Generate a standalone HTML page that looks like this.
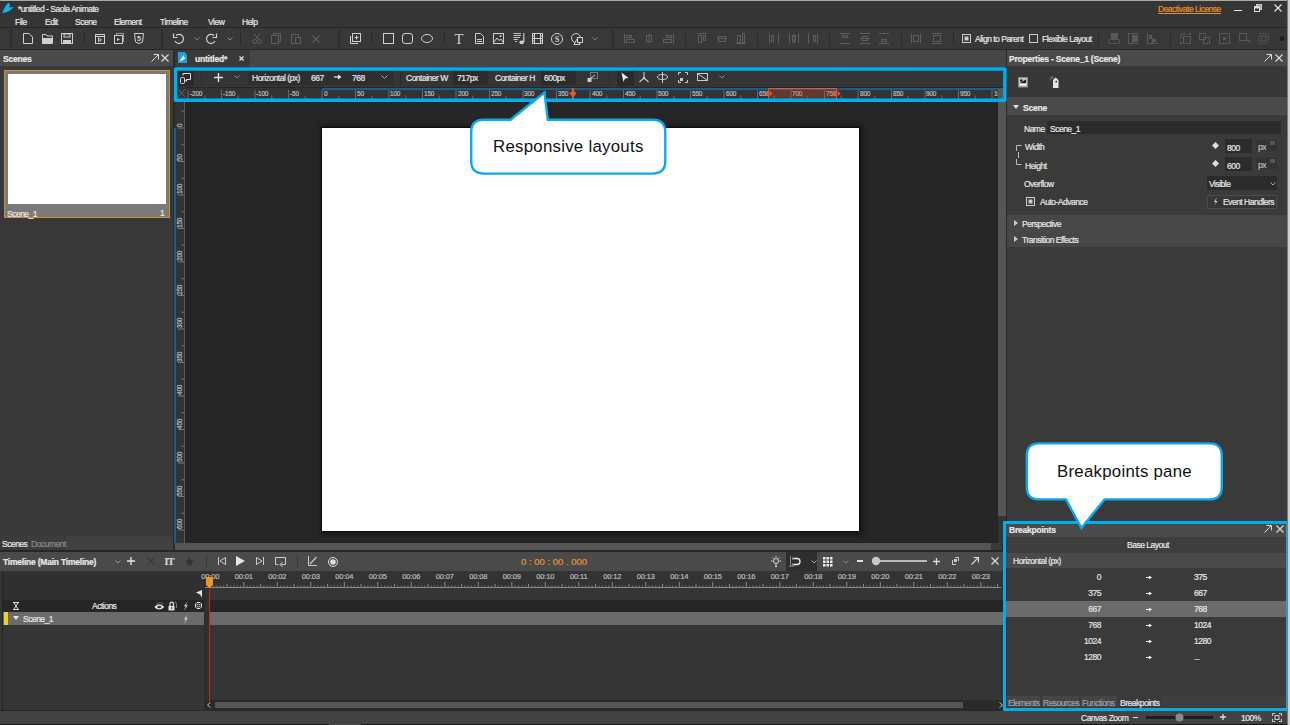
<!DOCTYPE html>
<html><head><meta charset="utf-8">
<style>
*{margin:0;padding:0;box-sizing:border-box}
html,body{width:1290px;height:725px;overflow:hidden;background:#353535;font-family:"Liberation Sans",sans-serif;color:#e2e2e2}
.a{position:absolute}
.t{position:absolute;white-space:nowrap;font-size:8px;line-height:10px;letter-spacing:-0.3px;-webkit-text-stroke:0.2px currentColor}
.t.b{letter-spacing:0}
svg{position:absolute;overflow:visible}
</style></head><body>
<div class="a" style="left:0px;top:0px;width:1290px;height:1px;background:#a9a9a9;"></div>
<div class="a" style="left:0px;top:1px;width:1287px;height:26px;background:#353535;"></div>
<svg style="left:0px;top:0px;" width="16" height="16" viewBox="0 0 16 16"><path d="M2.2 13.6 C3.5 9.5 5.5 5 8.5 2.8 C10.3 4 10.2 6.2 9.2 7.6 L13.6 7 C12 9.2 8.5 11.5 5.8 12.6 L4.5 12.6 Z" fill="#0cb4f0"/></svg>
<div class="t" style="left:18px;top:4px;font-size:8.5px;color:#e8e8e8;letter-spacing:-0.5px;">*untitled - Saola Animate</div>
<div class="t" style="left:15px;top:17px;font-size:8.5px;color:#e8e8e8;letter-spacing:-0.5px;">File</div>
<div class="t" style="left:45px;top:17px;font-size:8.5px;color:#e8e8e8;letter-spacing:-0.5px;">Edit</div>
<div class="t" style="left:75px;top:17px;font-size:8.5px;color:#e8e8e8;letter-spacing:-0.5px;">Scene</div>
<div class="t" style="left:114px;top:17px;font-size:8.5px;color:#e8e8e8;letter-spacing:-0.5px;">Element</div>
<div class="t" style="left:160px;top:17px;font-size:8.5px;color:#e8e8e8;letter-spacing:-0.5px;">Timeline</div>
<div class="t" style="left:208px;top:17px;font-size:8.5px;color:#e8e8e8;letter-spacing:-0.5px;">View</div>
<div class="t" style="left:242px;top:17px;font-size:8.5px;color:#e8e8e8;letter-spacing:-0.5px;">Help</div>
<div class="t" style="left:1158px;top:4px;font-size:8.5px;color:#e8922c;letter-spacing:-0.5px;text-decoration:underline;">Deactivate License</div>
<div class="a" style="left:1234px;top:9.5px;width:8px;height:1.7px;background:#e6e6e6;"></div>
<svg style="left:1254px;top:4px;" width="8" height="8" viewBox="0 0 8 8"><rect x="2.5" y="0.5" width="5" height="5" fill="#999" stroke="#ccc"/><rect x="0.5" y="2.5" width="5" height="5" fill="#333" stroke="#ddd"/><rect x="1" y="3" width="4" height="1.5" fill="#ddd"/></svg>
<svg style="left:1274px;top:4px;" width="8" height="8" viewBox="0 0 8 8"><path d="M0.5 0.5 L7.5 7.5 M7.5 0.5 L0.5 7.5" stroke="#e6e6e6" stroke-width="1.2"/></svg>
<div class="a" style="left:0px;top:27px;width:1287px;height:1px;background:#262626;"></div>
<div class="a" style="left:0px;top:28px;width:1287px;height:21px;background:#383838;"></div>
<div class="a" style="left:0px;top:49px;width:1287px;height:1px;background:#262626;"></div>
<svg style="left:10px;top:30px;" width="2" height="17" viewBox="0 0 2 17"><path d="M1 0 V17" stroke="#1e1e1e" stroke-width="2" stroke-dasharray="1 1"/></svg>
<svg style="left:161px;top:30px;" width="2" height="17" viewBox="0 0 2 17"><path d="M1 0 V17" stroke="#1e1e1e" stroke-width="2" stroke-dasharray="1 1"/></svg>
<svg style="left:338px;top:30px;" width="2" height="17" viewBox="0 0 2 17"><path d="M1 0 V17" stroke="#1e1e1e" stroke-width="2" stroke-dasharray="1 1"/></svg>
<svg style="left:612px;top:30px;" width="2" height="17" viewBox="0 0 2 17"><path d="M1 0 V17" stroke="#1e1e1e" stroke-width="2" stroke-dasharray="1 1"/></svg>
<div class="a" style="left:84px;top:32px;width:1px;height:13px;background:#2a2a2a;"></div>
<div class="a" style="left:371px;top:32px;width:1px;height:13px;background:#2a2a2a;"></div>
<div class="a" style="left:444px;top:32px;width:1px;height:13px;background:#2a2a2a;"></div>
<div class="a" style="left:685px;top:32px;width:1px;height:13px;background:#2a2a2a;"></div>
<div class="a" style="left:757px;top:32px;width:1px;height:13px;background:#2a2a2a;"></div>
<div class="a" style="left:829px;top:32px;width:1px;height:13px;background:#2a2a2a;"></div>
<div class="a" style="left:901px;top:32px;width:1px;height:13px;background:#2a2a2a;"></div>
<div class="a" style="left:953px;top:32px;width:1px;height:13px;background:#2a2a2a;"></div>
<div class="a" style="left:1098px;top:32px;width:1px;height:13px;background:#2a2a2a;"></div>
<div class="a" style="left:1170px;top:32px;width:1px;height:13px;background:#2a2a2a;"></div>
<svg style="left:23px;top:33px;" width="10" height="11" viewBox="0 0 10 11"><path d="M0.5 0.5 H6 L9.5 4 V10.5 H0.5 Z" fill="none" stroke="#d0d0d0"/></svg>
<svg style="left:42px;top:34px;" width="11" height="10" viewBox="0 0 11 10"><path d="M0.5 9.5 V0.5 H4 L5 2 H10.5 V9.5 Z" fill="none" stroke="#d0d0d0"/><rect x="1" y="4" width="9" height="5" fill="#d0d0d0"/></svg>
<svg style="left:61px;top:33px;" width="12" height="11" viewBox="0 0 12 11"><rect x="0.5" y="0.5" width="11" height="10" fill="none" stroke="#d0d0d0"/><rect x="3" y="1" width="6" height="3" fill="none" stroke="#d0d0d0"/><rect x="2" y="7" width="8" height="3" fill="#d0d0d0"/></svg>
<svg style="left:95px;top:34px;" width="10" height="10" viewBox="0 0 10 10"><rect x="0.5" y="0.5" width="9" height="9" fill="none" stroke="#d0d0d0"/><path d="M0.5 2.5 H9.5" stroke="#d0d0d0"/><path d="M3.5 4 L6.5 5.8 L3.5 7.6 Z" fill="none" stroke="#d0d0d0"/></svg>
<svg style="left:114px;top:33px;" width="10" height="11" viewBox="0 0 10 11"><rect x="2.5" y="0.5" width="7" height="8" fill="none" stroke="#999"/><rect x="0.5" y="2.5" width="8" height="8" fill="#383838" stroke="#d0d0d0"/><path d="M3 5 L6 6.5 L3 8 Z" fill="#d0d0d0"/></svg>
<svg style="left:134px;top:33px;" width="10" height="11" viewBox="0 0 10 11"><path d="M0.5 0.5 H9.5 L8.5 9 L5 10.5 L1.5 9 Z" fill="none" stroke="#d0d0d0"/><text x="5" y="8" font-size="7" text-anchor="middle" fill="#d0d0d0" font-family="Liberation Sans" font-weight="bold">5</text></svg>
<svg style="left:173px;top:33px;" width="12" height="11" viewBox="0 0 12 11"><path d="M3 2.5 A4.5 4.5 0 1 1 2 8" fill="none" stroke="#d0d0d0" stroke-width="1.2"/><path d="M0.5 0.5 V4.5 H4.5" fill="none" stroke="#d0d0d0" stroke-width="1.2"/></svg>
<svg style="left:194px;top:37px;" width="6" height="4" viewBox="0 0 6 4"><path d="M0.5 0.5 L3 3 L5.5 0.5" fill="none" stroke="#888"/></svg>
<svg style="left:205px;top:33px;" width="12" height="11" viewBox="0 0 12 11"><path d="M9 2.5 A4.5 4.5 0 1 0 10 8" fill="none" stroke="#d0d0d0" stroke-width="1.2"/><path d="M11.5 0.5 V4.5 H7.5" fill="none" stroke="#d0d0d0" stroke-width="1.2"/></svg>
<svg style="left:227px;top:37px;" width="6" height="4" viewBox="0 0 6 4"><path d="M0.5 0.5 L3 3 L5.5 0.5" fill="none" stroke="#888"/></svg>
<div class="a" style="left:240px;top:32px;width:1px;height:13px;background:#2a2a2a;"></div>
<svg style="left:252px;top:33px;" width="10" height="11" viewBox="0 0 10 11"><circle cx="2.5" cy="8.5" r="2" fill="none" stroke="#5e5e5e"/><circle cx="7.5" cy="8.5" r="2" fill="none" stroke="#5e5e5e"/><path d="M3.5 6.5 L8 0.5 M6.5 6.5 L2 0.5" stroke="#5e5e5e"/></svg>
<svg style="left:271px;top:33px;" width="10" height="11" viewBox="0 0 10 11"><rect x="2.5" y="0.5" width="7" height="8" fill="none" stroke="#5e5e5e"/><rect x="0.5" y="2.5" width="7" height="8" fill="#383838" stroke="#5e5e5e"/></svg>
<svg style="left:291px;top:33px;" width="10" height="11" viewBox="0 0 10 11"><rect x="0.5" y="1.5" width="7" height="9" fill="none" stroke="#5e5e5e"/><rect x="4.5" y="4.5" width="5" height="6" fill="#383838" stroke="#5e5e5e"/></svg>
<svg style="left:312px;top:35px;" width="8" height="8" viewBox="0 0 8 8"><path d="M0.5 0.5 L7.5 7.5 M7.5 0.5 L0.5 7.5" stroke="#5e5e5e" stroke-width="1.1"/></svg>
<svg style="left:350px;top:33px;" width="11" height="11" viewBox="0 0 11 11"><path d="M0.5 3 V10.5 H8" fill="none" stroke="#d0d0d0"/><rect x="2.5" y="0.5" width="8" height="8" fill="none" stroke="#d0d0d0"/><path d="M6.5 2.5 V6.5 M4.5 4.5 H8.5" stroke="#d0d0d0"/></svg>
<svg style="left:383px;top:33px;" width="11" height="11" viewBox="0 0 11 11"><rect x="0.5" y="0.5" width="10" height="10" fill="none" stroke="#d0d0d0"/></svg>
<svg style="left:402px;top:33px;" width="11" height="11" viewBox="0 0 11 11"><rect x="0.5" y="0.5" width="10" height="10" rx="2.5" fill="none" stroke="#d0d0d0"/></svg>
<svg style="left:421px;top:34px;" width="12" height="9" viewBox="0 0 12 9"><ellipse cx="6" cy="4.5" rx="5.5" ry="4" fill="none" stroke="#d0d0d0"/></svg>
<div class="t" style="left:454.5px;top:30.5px;font-size:14.5px;line-height:16px;font-family:Liberation Serif;color:#d0d0d0;letter-spacing:0;-webkit-text-stroke:0;">T</div>
<svg style="left:475px;top:33px;" width="9" height="11" viewBox="0 0 9 11"><path d="M0.5 0.5 H5.5 L8.5 3.5 V10.5 H0.5 Z" fill="none" stroke="#d0d0d0"/><path d="M2 6.5 H7 M2 8.5 H7" stroke="#d0d0d0"/></svg>
<svg style="left:493px;top:33px;" width="11" height="11" viewBox="0 0 11 11"><rect x="0.5" y="0.5" width="10" height="10" fill="none" stroke="#d0d0d0"/><path d="M1 9 L4 5 L6 7.5 L8 6 L10 9" fill="none" stroke="#d0d0d0"/><circle cx="7.5" cy="3" r="1" fill="#d0d0d0"/></svg>
<svg style="left:513px;top:33px;" width="12" height="12" viewBox="0 0 12 12"><path d="M0.5 0.5 H8 M0.5 2.5 H8 M0.5 4.5 H7 M0.5 6.5 H5 M2 8.5 H4" stroke="#d0d0d0" stroke-width="0.9"/><path d="M10.8 0 V9" stroke="#d0d0d0" stroke-width="1.2"/><ellipse cx="8.7" cy="9.3" rx="2.3" ry="1.9" fill="#d0d0d0"/></svg>
<svg style="left:532px;top:33px;" width="11" height="11" viewBox="0 0 11 11"><rect x="0.5" y="0.5" width="10" height="10" fill="none" stroke="#d0d0d0"/><path d="M2.5 0.5 V10.5 M8.5 0.5 V10.5 M0.5 3 H2.5 M0.5 5.5 H2.5 M0.5 8 H2.5 M8.5 3 H10.5 M8.5 5.5 H10.5 M8.5 8 H10.5 M2.5 5.5 H8.5" stroke="#d0d0d0"/></svg>
<svg style="left:551px;top:33px;" width="12" height="12" viewBox="0 0 12 12"><circle cx="6" cy="6" r="5.5" fill="none" stroke="#d0d0d0"/><text x="6" y="9" font-size="8.5" text-anchor="middle" fill="#d0d0d0" font-family="Liberation Serif" font-weight="bold">S</text></svg>
<svg style="left:571px;top:33px;" width="12" height="12" viewBox="0 0 12 12"><circle cx="5" cy="5" r="4.5" fill="none" stroke="#d0d0d0"/><path d="M3 11.5 L6 6 L9 11.5 Z" fill="#383838" stroke="#d0d0d0"/><rect x="6.5" y="4.5" width="5" height="5" fill="#383838" stroke="#d0d0d0"/></svg>
<svg style="left:592px;top:37px;" width="6" height="4" viewBox="0 0 6 4"><path d="M0.5 0.5 L3 3 L5.5 0.5" fill="none" stroke="#888"/></svg>
<svg style="left:624px;top:33px;" width="11" height="11" viewBox="0 0 11 11"><path d="M0.5 0.5 V10.5" stroke="#5e5e5e"/><rect x="2.5" y="2.5" width="5" height="2" fill="none" stroke="#5e5e5e"/><rect x="2.5" y="6.5" width="8" height="3" fill="none" stroke="#5e5e5e"/></svg>
<svg style="left:644px;top:33px;" width="11" height="11" viewBox="0 0 11 11"><path d="M5 0.5 V10.5" stroke="#5e5e5e"/><rect x="2.5" y="2.5" width="5" height="6" fill="none" stroke="#5e5e5e"/></svg>
<svg style="left:663px;top:33px;" width="11" height="11" viewBox="0 0 11 11"><path d="M10.5 0.5 V10.5" stroke="#5e5e5e"/><rect x="3.5" y="2.5" width="5" height="2" fill="none" stroke="#5e5e5e"/><rect x="0.5" y="6.5" width="8" height="3" fill="none" stroke="#5e5e5e"/></svg>
<svg style="left:697px;top:33px;" width="11" height="11" viewBox="0 0 11 11"><path d="M0 0.5 H10" stroke="#5e5e5e"/><rect x="1.5" y="2.5" width="3" height="7" fill="none" stroke="#5e5e5e"/><rect x="6.5" y="2.5" width="2" height="5" fill="none" stroke="#5e5e5e"/></svg>
<svg style="left:717px;top:33px;" width="11" height="11" viewBox="0 0 11 11"><path d="M0 5.5 H10" stroke="#5e5e5e"/><rect x="1.5" y="3.5" width="7" height="5" fill="none" stroke="#5e5e5e"/></svg>
<svg style="left:736px;top:33px;" width="11" height="11" viewBox="0 0 11 11"><path d="M0 10.5 H10" stroke="#5e5e5e"/><rect x="1.5" y="2.5" width="3" height="7" fill="none" stroke="#5e5e5e"/><rect x="6.5" y="0.5" width="2" height="9" fill="none" stroke="#5e5e5e"/></svg>
<svg style="left:769px;top:33px;" width="11" height="11" viewBox="0 0 11 11"><path d="M0.5 0.5 V10.5 M9.5 0.5 V10.5" stroke="#5e5e5e"/><rect x="2.5" y="2.5" width="2" height="6" fill="none" stroke="#5e5e5e"/></svg>
<svg style="left:789px;top:33px;" width="11" height="11" viewBox="0 0 11 11"><path d="M0.5 0.5 V10.5 M9.5 0.5 V10.5 M5 0.5 V10.5" stroke="#5e5e5e"/><rect x="3.5" y="2.5" width="3" height="6" fill="none" stroke="#5e5e5e"/></svg>
<svg style="left:808px;top:33px;" width="11" height="11" viewBox="0 0 11 11"><path d="M0.5 0.5 V10.5 M9.5 0.5 V10.5" stroke="#5e5e5e"/><rect x="5.5" y="2.5" width="2" height="6" fill="none" stroke="#5e5e5e"/></svg>
<svg style="left:840px;top:33px;" width="11" height="11" viewBox="0 0 11 11"><path d="M0 0.5 H10 M0 10.5 H10" stroke="#5e5e5e"/><rect x="2.5" y="2.5" width="5" height="2" fill="none" stroke="#5e5e5e"/></svg>
<svg style="left:860px;top:33px;" width="11" height="11" viewBox="0 0 11 11"><path d="M0 0.5 H10 M0 10.5 H10 M0 5.5 H10" stroke="#5e5e5e"/><rect x="2.5" y="3.5" width="5" height="4" fill="none" stroke="#5e5e5e"/></svg>
<svg style="left:879px;top:33px;" width="11" height="11" viewBox="0 0 11 11"><path d="M0 0.5 H10 M0 10.5 H10" stroke="#5e5e5e"/><rect x="2.5" y="6.5" width="5" height="2" fill="none" stroke="#5e5e5e"/></svg>
<svg style="left:911px;top:33px;" width="11" height="11" viewBox="0 0 11 11"><path d="M0.5 1 V10 M9.5 1 V10" stroke="#5e5e5e"/><rect x="2.5" y="2.5" width="5" height="6" fill="none" stroke="#5e5e5e"/></svg>
<svg style="left:932px;top:33px;" width="11" height="11" viewBox="0 0 11 11"><path d="M0 0.5 H10 M0 10.5 H10" stroke="#5e5e5e"/><rect x="1.5" y="2.5" width="7" height="6" fill="none" stroke="#5e5e5e"/></svg>
<svg style="left:962px;top:34px;" width="9" height="9" viewBox="0 0 9 9"><rect x="0.5" y="0.5" width="8" height="8" fill="none" stroke="#ccc"/><rect x="2.5" y="2.5" width="4" height="4" fill="#ccc"/></svg>
<div class="t" style="left:975px;top:34px;font-size:8.5px;color:#e8e8e8;letter-spacing:-0.5px;">Align to Parent</div>
<svg style="left:1029px;top:34px;" width="9" height="9" viewBox="0 0 9 9"><rect x="0.5" y="0.5" width="8" height="8" fill="none" stroke="#ccc"/></svg>
<div class="t" style="left:1042px;top:34px;font-size:8.5px;color:#e8e8e8;letter-spacing:-0.5px;">Flexible Layout</div>
<svg style="left:1108px;top:33px;" width="12" height="11" viewBox="0 0 12 11"><rect x="3.5" y="0.5" width="6" height="5" fill="#585858" stroke="#585858"/><rect x="0.5" y="6.5" width="11" height="4" rx="1" fill="none" stroke="#585858"/></svg>
<svg style="left:1128px;top:33px;" width="11" height="11" viewBox="0 0 11 11"><rect x="0.5" y="0.5" width="4" height="10" fill="none" stroke="#585858"/><rect x="5" y="2" width="5" height="7" fill="#585858"/><path d="M5 0.5 H11 M5 10.5 H11" stroke="#585858"/></svg>
<svg style="left:1147px;top:33px;" width="11" height="11" viewBox="0 0 11 11"><rect x="0.5" y="5.5" width="5" height="5" fill="none" stroke="#585858"/><rect x="2" y="2" width="3" height="3" fill="#585858"/><rect x="6" y="6" width="3" height="3" fill="#585858"/><path d="M0.5 0 V5 M6 10.5 H11" stroke="#585858"/></svg>
<svg style="left:1180px;top:33px;" width="11" height="11" viewBox="0 0 11 11"><rect x="3.5" y="3.5" width="7" height="7" fill="none" stroke="#585858"/><path d="M1 1 H6 M1 1 V6" stroke="#585858"/><rect x="0" y="9" width="2" height="2" fill="#585858"/><rect x="9" y="0" width="2" height="2" fill="#585858"/></svg>
<svg style="left:1199px;top:33px;" width="11" height="11" viewBox="0 0 11 11"><rect x="0.5" y="0.5" width="6" height="6" fill="none" stroke="#585858"/><rect x="4.5" y="4.5" width="6" height="6" fill="none" stroke="#585858"/></svg>
<svg style="left:1219px;top:33px;" width="11" height="11" viewBox="0 0 11 11"><rect x="0.5" y="0.5" width="10" height="10" fill="none" stroke="#585858"/><rect x="4" y="4" width="3" height="3" fill="#585858"/></svg>
<svg style="left:1239px;top:33px;" width="11" height="11" viewBox="0 0 11 11"><rect x="0.5" y="0.5" width="7" height="7" fill="none" stroke="#585858"/><path d="M7.5 7.5 H10.5 V10.5" stroke="#585858" fill="none"/></svg>
<svg style="left:1258px;top:33px;" width="11" height="11" viewBox="0 0 11 11"><rect x="0.5" y="0.5" width="10" height="10" rx="1.5" fill="none" stroke="#585858" stroke-dasharray="1.5 1"/><rect x="3" y="3" width="5" height="5" fill="none" stroke="#585858"/></svg>
<div class="t" style="left:1279px;top:33.5px;font-size:10px;color:#151515;font-weight:bold;">&#187;</div>
<div class="a" style="left:0px;top:50px;width:173px;height:16px;background:#4a4a4a;"></div>
<div class="t" style="left:3px;top:54px;font-size:8.5px;color:#e8e8e8;font-weight:bold;letter-spacing:-0.22px;">Scenes</div>
<svg style="left:151px;top:54px;" width="8" height="8" viewBox="0 0 8 8"><path d="M0.5 7.5 L7 1 M2.5 0.5 H7.5 V5.5" fill="none" stroke="#ddd"/></svg>
<svg style="left:161px;top:54px;" width="8" height="8" viewBox="0 0 8 8"><path d="M0.5 0.5 L7.5 7.5 M7.5 0.5 L0.5 7.5" stroke="#ddd" stroke-width="1.1"/></svg>
<div class="a" style="left:173px;top:50px;width:2px;height:501px;background:#2a2a2a;"></div>
<div class="a" style="left:0px;top:66px;width:173px;height:470px;background:#383838;"></div>
<div class="a" style="left:4px;top:69.5px;width:166px;height:148px;background:#7a7a7a;border:1px solid #d98a2b;"></div>
<div class="a" style="left:8px;top:74px;width:158px;height:130px;background:#ffffff;"></div>
<div class="t" style="left:7px;top:208.5px;font-size:8.5px;color:#e8e8e8;letter-spacing:-0.5px;">Scene_1</div>
<div class="t" style="left:160px;top:208px;font-size:8.5px;color:#e8e8e8;letter-spacing:-0.5px;">1</div>
<div class="a" style="left:0px;top:536px;width:173px;height:14px;background:#414141;"></div>
<div class="a" style="left:0px;top:536px;width:28px;height:14px;background:#3a3a3a;"></div>
<div class="t" style="left:2px;top:539px;font-size:8.5px;color:#e8e8e8;letter-spacing:-0.5px;">Scenes</div>
<div class="a" style="left:29px;top:536px;width:37px;height:14px;background:#3c3c3c;"></div>
<div class="t" style="left:31px;top:539px;font-size:8.5px;color:#8c8c8c;letter-spacing:-0.5px;">Document</div>
<div class="a" style="left:0px;top:550px;width:1006px;height:2px;background:#262626;"></div>
<div class="a" style="left:175px;top:50px;width:831px;height:17px;background:#454545;"></div>
<div class="a" style="left:175px;top:50px;width:75px;height:17px;background:#3a3a3a;"></div>
<svg style="left:178px;top:52px;" width="9" height="11" viewBox="0 0 9 11"><path d="M0 0 H6.5 L9 2.5 V11 H0 Z" fill="#1aa0dc"/><path d="M1.5 9.5 C2.5 7 4 5 6 3 L6.2 5.8 L8 5.5 C6.5 7.5 4.5 8.8 1.5 9.5 Z" fill="#f0f0f0"/></svg>
<div class="t" style="left:195px;top:54px;font-size:8.5px;color:#e8e8e8;font-weight:bold;letter-spacing:-0.22px;">untitled*</div>
<svg style="left:238.5px;top:56px;" width="5" height="5" viewBox="0 0 5 5"><path d="M0.5 0.5 L4.5 4.5 M4.5 0.5 L0.5 4.5" stroke="#e0e0e0" stroke-width="1.3"/></svg>
<div class="a" style="left:175px;top:67px;width:831px;height:484px;background:#262626;"></div>
<div class="a" style="left:177px;top:70px;width:826px;height:17px;background:#353535;"></div>
<div class="a" style="left:177px;top:70px;width:17px;height:16px;background:#2a2a2a;"></div>
<svg style="left:180px;top:73px;" width="11" height="11" viewBox="0 0 11 11"><rect x="0.5" y="4.5" width="4" height="6" rx="1" fill="none" stroke="#ddd"/><path d="M3 2.5 V0.5 H10.5 V6.5 H6" fill="none" stroke="#ddd"/><path d="M5 7.5 L7 6 L7 9 Z" fill="#ddd"/></svg>
<div class="a" style="left:201px;top:72px;width:1px;height:13px;background:#2a2a2a;"></div>
<svg style="left:214px;top:73px;" width="9" height="9" viewBox="0 0 9 9"><path d="M4.5 0 V9 M0 4.5 H9" stroke="#e0e0e0" stroke-width="1.4"/></svg>
<svg style="left:234px;top:75px;" width="6" height="4" viewBox="0 0 6 4"><path d="M0.5 0.5 L3 3 L5.5 0.5" fill="none" stroke="#888"/></svg>
<div class="a" style="left:248px;top:70px;width:145px;height:15px;background:#2e2e2e;"></div>
<div class="t" style="left:252px;top:73px;font-size:8.5px;color:#e8e8e8;letter-spacing:-0.5px;">Horizontal (px)</div>
<div class="t" style="left:311px;top:73px;font-size:8.5px;color:#e8e8e8;letter-spacing:-0.5px;">667</div>
<svg style="left:334px;top:74px;" width="8" height="6" viewBox="0 0 8 6"><path d="M0 3 H6" stroke="#eee" stroke-width="1.2"/><path d="M4 0.5 L7.5 3 L4 5.5 Z" fill="#eee"/></svg>
<div class="t" style="left:352px;top:73px;font-size:8.5px;color:#e8e8e8;letter-spacing:-0.5px;">768</div>
<svg style="left:381px;top:75px;" width="7" height="4" viewBox="0 0 7 4"><path d="M0.5 0.5 L3.5 3.5 L6.5 0.5" fill="none" stroke="#aaa"/></svg>
<div class="a" style="left:400px;top:72px;width:1px;height:13px;background:#2a2a2a;"></div>
<div class="t" style="left:406px;top:73px;font-size:8.5px;color:#e8e8e8;letter-spacing:-0.5px;">Container W</div>
<div class="a" style="left:453px;top:70px;width:35px;height:15px;background:#2b2b2b;"></div>
<div class="t" style="left:457px;top:73px;font-size:8.5px;color:#e8e8e8;letter-spacing:-0.5px;">717px</div>
<div class="t" style="left:495px;top:73px;font-size:8.5px;color:#e8e8e8;letter-spacing:-0.5px;">Container H</div>
<div class="a" style="left:541px;top:70px;width:35px;height:15px;background:#2b2b2b;"></div>
<div class="t" style="left:544px;top:73px;font-size:8.5px;color:#e8e8e8;letter-spacing:-0.5px;">600px</div>
<svg style="left:587px;top:72px;" width="11" height="11" viewBox="0 0 11 11"><rect x="3.5" y="0.5" width="7" height="6" fill="none" stroke="#bbb" stroke-dasharray="1 1"/><rect x="0.5" y="6" width="4" height="4" fill="#ccc"/><path d="M4 6 L8 3" stroke="#ccc"/></svg>
<div class="a" style="left:609px;top:72px;width:1px;height:13px;background:#2a2a2a;"></div>
<div class="a" style="left:617px;top:70px;width:17px;height:16px;background:#2a2a2a;"></div>
<svg style="left:621px;top:72px;" width="8" height="11" viewBox="0 0 8 11"><path d="M0.5 0.5 L7.5 6 L4 6.5 L2.5 10 Z" fill="#eee"/></svg>
<svg style="left:639px;top:72px;" width="10" height="11" viewBox="0 0 10 11"><path d="M5 0 V6 L0.5 10 M5 6 L9.5 10" fill="none" stroke="#ccc" stroke-width="1.1"/><circle cx="5" cy="6" r="1.2" fill="#ccc"/></svg>
<svg style="left:657px;top:72px;" width="11" height="11" viewBox="0 0 11 11"><ellipse cx="5.5" cy="5" rx="5" ry="2.5" fill="none" stroke="#ccc"/><path d="M5.5 0 V11" stroke="#ccc"/></svg>
<svg style="left:678px;top:72px;" width="10" height="11" viewBox="0 0 10 11"><path d="M0.5 3 V0.5 H3 M7 0.5 H9.5 V3 M9.5 8 V10.5 H7 M3 10.5 H0.5 V8" fill="none" stroke="#ccc"/><rect x="2" y="6" width="3" height="3" fill="#ccc"/></svg>
<svg style="left:697px;top:72px;" width="11" height="10" viewBox="0 0 11 10"><rect x="0.5" y="1.5" width="10" height="7" fill="none" stroke="#ccc"/><path d="M0.5 1.5 L10.5 8.5" stroke="#ccc"/></svg>
<svg style="left:719px;top:75px;" width="6" height="4" viewBox="0 0 6 4"><path d="M0.5 0.5 L3 3 L5.5 0.5" fill="none" stroke="#888"/></svg>
<div class="a" style="left:177px;top:87px;width:826px;height:12px;background:#333333;"></div>
<div class="a" style="left:177px;top:87px;width:826px;height:1px;background:#262626;"></div>
<div class="a" style="left:322px;top:88px;width:681px;height:2px;background:#1b5e8c;"></div>
<svg style="left:0px;top:0px;" width="1290" height="100" viewBox="0 0 1290 100"><path d="M188.0 90 V99" stroke="#6a6a6a"/><path d="M204.8 95.5 V99" stroke="#6a6a6a"/><path d="M221.5 90 V99" stroke="#6a6a6a"/><path d="M238.2 95.5 V99" stroke="#6a6a6a"/><path d="M255.0 90 V99" stroke="#6a6a6a"/><path d="M271.8 95.5 V99" stroke="#6a6a6a"/><path d="M288.5 90 V99" stroke="#6a6a6a"/><path d="M305.2 95.5 V99" stroke="#6a6a6a"/><path d="M322.0 90 V99" stroke="#6a6a6a"/><path d="M338.8 95.5 V99" stroke="#6a6a6a"/><path d="M355.5 90 V99" stroke="#6a6a6a"/><path d="M372.2 95.5 V99" stroke="#6a6a6a"/><path d="M389.0 90 V99" stroke="#6a6a6a"/><path d="M405.8 95.5 V99" stroke="#6a6a6a"/><path d="M422.5 90 V99" stroke="#6a6a6a"/><path d="M439.2 95.5 V99" stroke="#6a6a6a"/><path d="M456.0 90 V99" stroke="#6a6a6a"/><path d="M472.8 95.5 V99" stroke="#6a6a6a"/><path d="M489.5 90 V99" stroke="#6a6a6a"/><path d="M506.2 95.5 V99" stroke="#6a6a6a"/><path d="M523.0 90 V99" stroke="#6a6a6a"/><path d="M539.8 95.5 V99" stroke="#6a6a6a"/><path d="M556.5 90 V99" stroke="#6a6a6a"/><path d="M573.2 95.5 V99" stroke="#6a6a6a"/><path d="M590.0 90 V99" stroke="#6a6a6a"/><path d="M606.8 95.5 V99" stroke="#6a6a6a"/><path d="M623.5 90 V99" stroke="#6a6a6a"/><path d="M640.2 95.5 V99" stroke="#6a6a6a"/><path d="M657.0 90 V99" stroke="#6a6a6a"/><path d="M673.8 95.5 V99" stroke="#6a6a6a"/><path d="M690.5 90 V99" stroke="#6a6a6a"/><path d="M707.2 95.5 V99" stroke="#6a6a6a"/><path d="M724.0 90 V99" stroke="#6a6a6a"/><path d="M740.8 95.5 V99" stroke="#6a6a6a"/><path d="M757.5 90 V99" stroke="#6a6a6a"/><path d="M774.2 95.5 V99" stroke="#6a6a6a"/><path d="M791.0 90 V99" stroke="#6a6a6a"/><path d="M807.8 95.5 V99" stroke="#6a6a6a"/><path d="M824.5 90 V99" stroke="#6a6a6a"/><path d="M841.2 95.5 V99" stroke="#6a6a6a"/><path d="M858.0 90 V99" stroke="#6a6a6a"/><path d="M874.8 95.5 V99" stroke="#6a6a6a"/><path d="M891.5 90 V99" stroke="#6a6a6a"/><path d="M908.2 95.5 V99" stroke="#6a6a6a"/><path d="M925.0 90 V99" stroke="#6a6a6a"/><path d="M941.8 95.5 V99" stroke="#6a6a6a"/><path d="M958.5 90 V99" stroke="#6a6a6a"/><path d="M975.2 95.5 V99" stroke="#6a6a6a"/><path d="M992.0 90 V99" stroke="#6a6a6a"/></svg>
<div class="t" style="left:190px;top:88.5px;font-size:6.5px;color:#bdbdbd;letter-spacing:-0.2px;">-200</div>
<div class="t" style="left:223px;top:88.5px;font-size:6.5px;color:#bdbdbd;letter-spacing:-0.2px;">-150</div>
<div class="t" style="left:256px;top:88.5px;font-size:6.5px;color:#bdbdbd;letter-spacing:-0.2px;">-100</div>
<div class="t" style="left:290px;top:88.5px;font-size:6.5px;color:#bdbdbd;letter-spacing:-0.2px;">-50</div>
<div class="t" style="left:324px;top:88.5px;font-size:6.5px;color:#bdbdbd;letter-spacing:-0.2px;">0</div>
<div class="t" style="left:357px;top:88.5px;font-size:6.5px;color:#bdbdbd;letter-spacing:-0.2px;">50</div>
<div class="t" style="left:390px;top:88.5px;font-size:6.5px;color:#bdbdbd;letter-spacing:-0.2px;">100</div>
<div class="t" style="left:424px;top:88.5px;font-size:6.5px;color:#bdbdbd;letter-spacing:-0.2px;">150</div>
<div class="t" style="left:458px;top:88.5px;font-size:6.5px;color:#bdbdbd;letter-spacing:-0.2px;">200</div>
<div class="t" style="left:491px;top:88.5px;font-size:6.5px;color:#bdbdbd;letter-spacing:-0.2px;">250</div>
<div class="t" style="left:524px;top:88.5px;font-size:6.5px;color:#bdbdbd;letter-spacing:-0.2px;">300</div>
<div class="t" style="left:558px;top:88.5px;font-size:6.5px;color:#bdbdbd;letter-spacing:-0.2px;">350</div>
<div class="t" style="left:592px;top:88.5px;font-size:6.5px;color:#bdbdbd;letter-spacing:-0.2px;">400</div>
<div class="t" style="left:625px;top:88.5px;font-size:6.5px;color:#bdbdbd;letter-spacing:-0.2px;">450</div>
<div class="t" style="left:658px;top:88.5px;font-size:6.5px;color:#bdbdbd;letter-spacing:-0.2px;">500</div>
<div class="t" style="left:692px;top:88.5px;font-size:6.5px;color:#bdbdbd;letter-spacing:-0.2px;">550</div>
<div class="t" style="left:726px;top:88.5px;font-size:6.5px;color:#bdbdbd;letter-spacing:-0.2px;">600</div>
<div class="t" style="left:759px;top:88.5px;font-size:6.5px;color:#bdbdbd;letter-spacing:-0.2px;">650</div>
<div class="t" style="left:792px;top:88.5px;font-size:6.5px;color:#bdbdbd;letter-spacing:-0.2px;">700</div>
<div class="t" style="left:826px;top:88.5px;font-size:6.5px;color:#bdbdbd;letter-spacing:-0.2px;">750</div>
<div class="t" style="left:860px;top:88.5px;font-size:6.5px;color:#bdbdbd;letter-spacing:-0.2px;">800</div>
<div class="t" style="left:893px;top:88.5px;font-size:6.5px;color:#bdbdbd;letter-spacing:-0.2px;">850</div>
<div class="t" style="left:926px;top:88.5px;font-size:6.5px;color:#bdbdbd;letter-spacing:-0.2px;">900</div>
<div class="t" style="left:960px;top:88.5px;font-size:6.5px;color:#bdbdbd;letter-spacing:-0.2px;">950</div>
<div class="t" style="left:994px;top:88.5px;font-size:6.5px;color:#bdbdbd;letter-spacing:-0.2px;">1000</div>
<div class="a" style="left:177px;top:87px;width:9px;height:12px;background:#353535;"></div>
<svg style="left:178px;top:89px;" width="7" height="8" viewBox="0 0 7 8"><path d="M0 0 L7 8 M0 8 L7 0" stroke="#666"/></svg>
<div class="a" style="left:768px;top:88px;width:69px;height:11px;background:rgba(190,70,45,0.32);"></div>
<div class="a" style="left:768px;top:88px;width:69px;height:1px;background:#e8552a;"></div>
<div class="a" style="left:768px;top:88px;width:1px;height:11px;background:#e8552a;"></div>
<div class="a" style="left:836px;top:88px;width:1px;height:11px;background:#e8552a;"></div>
<div class="a" style="left:572px;top:88px;width:1.5px;height:11px;background:#e8552a;"></div>
<svg style="left:568.7px;top:90px;" width="8" height="7" viewBox="0 0 8 7"><path d="M0.5 3.5 L3.3 0.5 V6.5 Z M7.5 3.5 L4.7 0.5 V6.5 Z" fill="#e8552a"/></svg>
<svg style="left:764.5px;top:90px;" width="8" height="7" viewBox="0 0 8 7"><path d="M0.5 3.5 L3.3 0.5 V6.5 Z M7.5 3.5 L4.7 0.5 V6.5 Z" fill="#e8552a"/></svg>
<svg style="left:832.5px;top:90px;" width="8" height="7" viewBox="0 0 8 7"><path d="M0.5 3.5 L3.3 0.5 V6.5 Z M7.5 3.5 L4.7 0.5 V6.5 Z" fill="#e8552a"/></svg>
<div class="a" style="left:998px;top:88px;width:5px;height:11px;background:#555;"></div>
<div class="a" style="left:175px;top:99px;width:10px;height:444px;background:#333333;"></div>
<div class="a" style="left:174px;top:128px;width:2px;height:415px;background:#1b5e8c;"></div>
<div class="a" style="left:184px;top:99px;width:1px;height:444px;background:#5a5a5a;"></div>
<svg style="left:0px;top:0px;" width="190" height="600" viewBox="0 0 190 600"><path d="M178 128.0 H184" stroke="#7a7a7a"/><path d="M181.5 111.2 H184" stroke="#7a7a7a"/><path d="M178 161.5 H184" stroke="#7a7a7a"/><path d="M181.5 144.8 H184" stroke="#7a7a7a"/><path d="M178 195.0 H184" stroke="#7a7a7a"/><path d="M181.5 178.2 H184" stroke="#7a7a7a"/><path d="M178 228.5 H184" stroke="#7a7a7a"/><path d="M181.5 211.8 H184" stroke="#7a7a7a"/><path d="M178 262.0 H184" stroke="#7a7a7a"/><path d="M181.5 245.2 H184" stroke="#7a7a7a"/><path d="M178 295.5 H184" stroke="#7a7a7a"/><path d="M181.5 278.8 H184" stroke="#7a7a7a"/><path d="M178 329.0 H184" stroke="#7a7a7a"/><path d="M181.5 312.2 H184" stroke="#7a7a7a"/><path d="M178 362.5 H184" stroke="#7a7a7a"/><path d="M181.5 345.8 H184" stroke="#7a7a7a"/><path d="M178 396.0 H184" stroke="#7a7a7a"/><path d="M181.5 379.2 H184" stroke="#7a7a7a"/><path d="M178 429.5 H184" stroke="#7a7a7a"/><path d="M181.5 412.8 H184" stroke="#7a7a7a"/><path d="M178 463.0 H184" stroke="#7a7a7a"/><path d="M181.5 446.2 H184" stroke="#7a7a7a"/><path d="M178 496.5 H184" stroke="#7a7a7a"/><path d="M181.5 479.8 H184" stroke="#7a7a7a"/><path d="M178 530.0 H184" stroke="#7a7a7a"/><path d="M181.5 513.2 H184" stroke="#7a7a7a"/></svg>
<div class="t" style="left:174.5px;top:127.0px;font-size:6.5px;line-height:10px;color:#bdbdbd;letter-spacing:-0.2px;transform:rotate(-90deg);transform-origin:0 0;">0</div>
<div class="t" style="left:174.5px;top:160.5px;font-size:6.5px;line-height:10px;color:#bdbdbd;letter-spacing:-0.2px;transform:rotate(-90deg);transform-origin:0 0;">50</div>
<div class="t" style="left:174.5px;top:194.0px;font-size:6.5px;line-height:10px;color:#bdbdbd;letter-spacing:-0.2px;transform:rotate(-90deg);transform-origin:0 0;">100</div>
<div class="t" style="left:174.5px;top:227.5px;font-size:6.5px;line-height:10px;color:#bdbdbd;letter-spacing:-0.2px;transform:rotate(-90deg);transform-origin:0 0;">150</div>
<div class="t" style="left:174.5px;top:261.0px;font-size:6.5px;line-height:10px;color:#bdbdbd;letter-spacing:-0.2px;transform:rotate(-90deg);transform-origin:0 0;">200</div>
<div class="t" style="left:174.5px;top:294.5px;font-size:6.5px;line-height:10px;color:#bdbdbd;letter-spacing:-0.2px;transform:rotate(-90deg);transform-origin:0 0;">250</div>
<div class="t" style="left:174.5px;top:328.0px;font-size:6.5px;line-height:10px;color:#bdbdbd;letter-spacing:-0.2px;transform:rotate(-90deg);transform-origin:0 0;">300</div>
<div class="t" style="left:174.5px;top:361.5px;font-size:6.5px;line-height:10px;color:#bdbdbd;letter-spacing:-0.2px;transform:rotate(-90deg);transform-origin:0 0;">350</div>
<div class="t" style="left:174.5px;top:395.0px;font-size:6.5px;line-height:10px;color:#bdbdbd;letter-spacing:-0.2px;transform:rotate(-90deg);transform-origin:0 0;">400</div>
<div class="t" style="left:174.5px;top:428.5px;font-size:6.5px;line-height:10px;color:#bdbdbd;letter-spacing:-0.2px;transform:rotate(-90deg);transform-origin:0 0;">450</div>
<div class="t" style="left:174.5px;top:462.0px;font-size:6.5px;line-height:10px;color:#bdbdbd;letter-spacing:-0.2px;transform:rotate(-90deg);transform-origin:0 0;">500</div>
<div class="t" style="left:174.5px;top:495.5px;font-size:6.5px;line-height:10px;color:#bdbdbd;letter-spacing:-0.2px;transform:rotate(-90deg);transform-origin:0 0;">550</div>
<div class="t" style="left:174.5px;top:529.0px;font-size:6.5px;line-height:10px;color:#bdbdbd;letter-spacing:-0.2px;transform:rotate(-90deg);transform-origin:0 0;">600</div>
<div class="a" style="left:322px;top:128px;width:537px;height:403px;background:#ffffff;box-shadow:0 0 0 1px #0c0c0c,1px 1px 6px 2px rgba(0,0,0,.6);"></div>
<div class="a" style="left:998px;top:99px;width:8px;height:444px;background:#333333;"></div>
<div class="a" style="left:998px;top:99px;width:8px;height:417px;background:#555555;"></div>
<div class="a" style="left:175px;top:543px;width:827px;height:7px;background:#3a3a3a;"></div>
<div class="a" style="left:175px;top:543px;width:816px;height:7px;background:#555555;"></div>
<div class="a" style="left:1006px;top:50px;width:1px;height:662px;background:#2a2a2a;"></div>
<div class="a" style="left:1007px;top:50px;width:280px;height:470px;background:#3a3a3a;"></div>
<div class="a" style="left:1007px;top:50px;width:280px;height:16px;background:#4a4a4a;"></div>
<div class="t" style="left:1009px;top:54px;font-size:8.5px;color:#e8e8e8;font-weight:bold;letter-spacing:-0.22px;">Properties - Scene_1 (Scene)</div>
<svg style="left:1264px;top:54px;" width="8" height="8" viewBox="0 0 8 8"><path d="M0.5 7.5 L7 1 M2.5 0.5 H7.5 V5.5" fill="none" stroke="#ddd"/></svg>
<svg style="left:1275px;top:54px;" width="8" height="8" viewBox="0 0 8 8"><path d="M0.5 0.5 L7.5 7.5 M7.5 0.5 L0.5 7.5" stroke="#ddd" stroke-width="1.1"/></svg>
<div class="a" style="left:1007px;top:66px;width:280px;height:31px;background:#373737;"></div>
<svg style="left:1018px;top:76.5px;" width="10" height="10.5" viewBox="0 0 10 10.5"><rect x="0.5" y="0.5" width="9" height="9.5" fill="#c4c4c4" stroke="#8a8a8a"/><path d="M2 6 L8 2.5 V6 Z" fill="#1a1a1a"/><rect x="2" y="2.5" width="2.5" height="2" fill="#1a1a1a"/><rect x="2" y="7" width="6" height="1.5" fill="#f4f4f4"/></svg>
<svg style="left:1050px;top:76px;" width="9" height="12" viewBox="0 0 9 12"><path d="M3 4 L5.5 1.5 L8.5 4 V12 H3 Z" fill="#e6e6e6"/><path d="M4.5 6 L7 4.5 V6.5 Z" fill="#222"/><path d="M0.5 1 L1.5 3 M2 0 L3 2.5 M0 3.5 L1 4" stroke="#999" stroke-width="0.8"/></svg>
<svg style="left:1019px;top:93.5px;" width="9" height="4" viewBox="0 0 9 4"><path d="M0.5 3.5 L4.5 0.5 L8.5 3.5" fill="#2e2e2e" stroke="#505050" stroke-width="0.8"/></svg>
<div class="a" style="left:1007px;top:97px;width:280px;height:18px;background:#4a4a4a;"></div>
<svg style="left:1013px;top:105px;" width="6" height="4" viewBox="0 0 6 4"><path d="M0 0 H6 L3 4 Z" fill="#ddd"/></svg>
<div class="t" style="left:1023px;top:103px;font-size:8.5px;color:#e8e8e8;font-weight:bold;letter-spacing:-0.22px;">Scene</div>
<div class="a" style="left:1007px;top:115px;width:280px;height:100px;background:#3a3a3a;"></div>
<div class="t" style="left:1024px;top:124px;font-size:8.5px;color:#e8e8e8;letter-spacing:-0.5px;">Name</div>
<div class="a" style="left:1047px;top:121px;width:234px;height:13px;background:#2b2b2b;"></div>
<div class="t" style="left:1050px;top:124px;font-size:8.5px;color:#e8e8e8;letter-spacing:-0.5px;">Scene_1</div>
<svg style="left:1016px;top:145px;" width="6" height="20" viewBox="0 0 6 20"><path d="M5.5 0.5 H0.5 V6 M0.5 14 V19.5 H5.5 M2.5 7 V13" fill="none" stroke="#bbb"/></svg>
<div class="t" style="left:1025px;top:142px;font-size:8.5px;color:#e8e8e8;letter-spacing:-0.5px;">Width</div>
<div class="t" style="left:1025px;top:161px;font-size:8.5px;color:#e8e8e8;letter-spacing:-0.5px;">Height</div>
<svg style="left:1212px;top:142px;" width="7" height="7" viewBox="0 0 7 7"><path d="M3.5 0 L7 3.5 L3.5 7 L0 3.5 Z" fill="#ddd"/></svg>
<div class="a" style="left:1225px;top:139px;width:27px;height:14px;background:#2b2b2b;"></div>
<div class="t" style="left:1227px;top:142.5px;font-size:8.5px;color:#e8e8e8;letter-spacing:-0.5px;">800</div>
<div class="a" style="left:1256px;top:140px;width:21px;height:11px;background:#333333;"></div>
<div class="t" style="left:1258px;top:141.5px;font-size:8.5px;color:#bbb;letter-spacing:-0.5px;">px</div>
<div class="a" style="left:1270px;top:141px;width:5px;height:4px;background:#555;"></div>
<svg style="left:1212px;top:160px;" width="7" height="7" viewBox="0 0 7 7"><path d="M3.5 0 L7 3.5 L3.5 7 L0 3.5 Z" fill="#ddd"/></svg>
<div class="a" style="left:1225px;top:157px;width:27px;height:14px;background:#2b2b2b;"></div>
<div class="t" style="left:1227px;top:160.5px;font-size:8.5px;color:#e8e8e8;letter-spacing:-0.5px;">600</div>
<div class="a" style="left:1256px;top:158px;width:21px;height:11px;background:#333333;"></div>
<div class="t" style="left:1258px;top:159.5px;font-size:8.5px;color:#bbb;letter-spacing:-0.5px;">px</div>
<div class="a" style="left:1270px;top:159px;width:5px;height:4px;background:#555;"></div>
<div class="t" style="left:1024px;top:179px;font-size:8.5px;color:#e8e8e8;letter-spacing:-0.5px;">Overflow</div>
<div class="a" style="left:1207px;top:176px;width:70px;height:14px;background:#2b2b2b;"></div>
<div class="t" style="left:1209px;top:179px;font-size:8.5px;color:#e8e8e8;letter-spacing:-0.5px;">Visible</div>
<svg style="left:1270px;top:182px;" width="6" height="4" viewBox="0 0 6 4"><path d="M0.5 0.5 L3 3 L5.5 0.5" fill="none" stroke="#aaa"/></svg>
<svg style="left:1026px;top:197px;" width="9" height="9" viewBox="0 0 9 9"><rect x="0.5" y="0.5" width="8" height="8" fill="none" stroke="#ccc"/><rect x="2.5" y="2.5" width="4" height="4" fill="#ccc"/></svg>
<div class="t" style="left:1040px;top:197px;font-size:8.5px;color:#e8e8e8;letter-spacing:-0.5px;">Auto-Advance</div>
<div class="a" style="left:1207px;top:195px;width:70px;height:14px;background:#363636;border:1px solid #4c4c4c;"></div>
<svg style="left:1213px;top:197px;" width="5" height="9" viewBox="0 0 5 9"><path d="M4 0 L1 5 H3 L1 9 L4.5 4 H2.5 Z" fill="#ddd"/></svg>
<div class="t" style="left:1223px;top:197px;font-size:8.5px;color:#e8e8e8;letter-spacing:-0.5px;">Event Handlers</div>
<div class="a" style="left:1007px;top:215px;width:280px;height:32px;background:#474747;"></div>
<svg style="left:1014px;top:220px;" width="4" height="6" viewBox="0 0 4 6"><path d="M0 0 L4 3 L0 6 Z" fill="#ccc"/></svg>
<div class="t" style="left:1022px;top:219px;font-size:8.5px;color:#e8e8e8;letter-spacing:-0.5px;">Perspective</div>
<svg style="left:1014px;top:236px;" width="4" height="6" viewBox="0 0 4 6"><path d="M0 0 L4 3 L0 6 Z" fill="#ccc"/></svg>
<div class="t" style="left:1022px;top:235px;font-size:8.5px;color:#e8e8e8;letter-spacing:-0.5px;">Transition Effects</div>
<div class="a" style="left:1007px;top:247px;width:280px;height:273px;background:#3a3a3a;"></div>
<div class="a" style="left:1007px;top:520px;width:280px;height:192px;background:#3a3a3a;"></div>
<div class="a" style="left:1006px;top:524px;width:280px;height:13px;background:#4a4a4a;"></div>
<div class="t" style="left:1009px;top:525px;font-size:8.5px;color:#e8e8e8;font-weight:bold;letter-spacing:-0.22px;">Breakpoints</div>
<svg style="left:1264px;top:525px;" width="8" height="8" viewBox="0 0 8 8"><path d="M0.5 7.5 L7 1 M2.5 0.5 H7.5 V5.5" fill="none" stroke="#ddd"/></svg>
<svg style="left:1276px;top:525px;" width="8" height="8" viewBox="0 0 8 8"><path d="M0.5 0.5 L7.5 7.5 M7.5 0.5 L0.5 7.5" stroke="#ddd" stroke-width="1.1"/></svg>
<div class="a" style="left:1006px;top:537px;width:280px;height:16px;background:#3e3e3e;"></div>
<div class="t" style="left:1127px;top:540px;font-size:8.5px;color:#e8e8e8;letter-spacing:-0.5px;">Base Layout</div>
<div class="a" style="left:1006px;top:553px;width:280px;height:15px;background:#4a4a4a;"></div>
<div class="t" style="left:1013px;top:556px;font-size:8.5px;color:#e8e8e8;letter-spacing:-0.5px;">Horizontal (px)</div>
<div class="t" style="left:1060px;top:572px;width:41px;text-align:right;font-size:8.5px;letter-spacing:-0.5px;">0</div>
<svg style="left:1146px;top:575px;" width="6" height="5" viewBox="0 0 6 5"><path d="M0 2.5 H4" stroke="#eee" stroke-width="1"/><path d="M3 0.5 L6 2.5 L3 4.5 Z" fill="#eee"/></svg>
<div class="t" style="left:1194px;top:572px;font-size:8.5px;color:#e8e8e8;letter-spacing:-0.5px;">375</div>
<div class="t" style="left:1060px;top:588px;width:41px;text-align:right;font-size:8.5px;letter-spacing:-0.5px;">375</div>
<svg style="left:1146px;top:591px;" width="6" height="5" viewBox="0 0 6 5"><path d="M0 2.5 H4" stroke="#eee" stroke-width="1"/><path d="M3 0.5 L6 2.5 L3 4.5 Z" fill="#eee"/></svg>
<div class="t" style="left:1194px;top:588px;font-size:8.5px;color:#e8e8e8;letter-spacing:-0.5px;">667</div>
<div class="a" style="left:1006px;top:601px;width:280px;height:16px;background:#6b6b6b;"></div>
<div class="t" style="left:1060px;top:604px;width:41px;text-align:right;font-size:8.5px;letter-spacing:-0.5px;">667</div>
<svg style="left:1146px;top:607px;" width="6" height="5" viewBox="0 0 6 5"><path d="M0 2.5 H4" stroke="#eee" stroke-width="1"/><path d="M3 0.5 L6 2.5 L3 4.5 Z" fill="#eee"/></svg>
<div class="t" style="left:1194px;top:604px;font-size:8.5px;color:#e8e8e8;letter-spacing:-0.5px;">768</div>
<div class="t" style="left:1060px;top:620px;width:41px;text-align:right;font-size:8.5px;letter-spacing:-0.5px;">768</div>
<svg style="left:1146px;top:623px;" width="6" height="5" viewBox="0 0 6 5"><path d="M0 2.5 H4" stroke="#eee" stroke-width="1"/><path d="M3 0.5 L6 2.5 L3 4.5 Z" fill="#eee"/></svg>
<div class="t" style="left:1194px;top:620px;font-size:8.5px;color:#e8e8e8;letter-spacing:-0.5px;">1024</div>
<div class="t" style="left:1060px;top:636px;width:41px;text-align:right;font-size:8.5px;letter-spacing:-0.5px;">1024</div>
<svg style="left:1146px;top:639px;" width="6" height="5" viewBox="0 0 6 5"><path d="M0 2.5 H4" stroke="#eee" stroke-width="1"/><path d="M3 0.5 L6 2.5 L3 4.5 Z" fill="#eee"/></svg>
<div class="t" style="left:1194px;top:636px;font-size:8.5px;color:#e8e8e8;letter-spacing:-0.5px;">1280</div>
<div class="t" style="left:1060px;top:652px;width:41px;text-align:right;font-size:8.5px;letter-spacing:-0.5px;">1280</div>
<svg style="left:1146px;top:655px;" width="6" height="5" viewBox="0 0 6 5"><path d="M0 2.5 H4" stroke="#eee" stroke-width="1"/><path d="M3 0.5 L6 2.5 L3 4.5 Z" fill="#eee"/></svg>
<div class="t" style="left:1194px;top:652px;font-size:8.5px;color:#e8e8e8;letter-spacing:-0.5px;">...</div>
<div class="a" style="left:1006px;top:696px;width:280px;height:11px;background:#3f3f3f;"></div>
<div class="a" style="left:1006px;top:696px;width:155px;height:11px;background:#3a3a3a;"></div>
<div class="a" style="left:1007px;top:696px;width:33px;height:11px;background:#454545;"></div>
<div class="t" style="left:1008px;top:698px;font-size:8.5px;color:#a0a0a0;letter-spacing:-0.5px;">Elements</div>
<div class="a" style="left:1042px;top:696px;width:37px;height:11px;background:#454545;"></div>
<div class="t" style="left:1043px;top:698px;font-size:8.5px;color:#a0a0a0;letter-spacing:-0.5px;">Resources</div>
<div class="a" style="left:1081px;top:696px;width:36px;height:11px;background:#454545;"></div>
<div class="t" style="left:1082px;top:698px;font-size:8.5px;color:#a0a0a0;letter-spacing:-0.5px;">Functions</div>
<div class="t" style="left:1120px;top:698px;font-size:8.5px;color:#e8e8e8;letter-spacing:-0.5px;">Breakpoints</div>
<div class="a" style="left:0px;top:552px;width:1006px;height:20px;background:#4a4a4a;"></div>
<div class="t" style="left:3px;top:557px;font-size:8.5px;color:#e8e8e8;font-weight:bold;letter-spacing:-0.22px;">Timeline (Main Timeline)</div>
<svg style="left:115px;top:560px;" width="6" height="4" viewBox="0 0 6 4"><path d="M0.5 0.5 L3 3 L5.5 0.5" fill="none" stroke="#999"/></svg>
<svg style="left:127px;top:557px;" width="8" height="8" viewBox="0 0 8 8"><path d="M4 0 V8 M0 4 H8" stroke="#e6e6e6" stroke-width="1.3"/></svg>
<svg style="left:147px;top:557px;" width="8" height="8" viewBox="0 0 8 8"><path d="M0.5 0.5 L7.5 7.5 M7.5 0.5 L0.5 7.5" stroke="#3a3a3a" stroke-width="1.1"/></svg>
<div class="t" style="left:164.5px;top:556.5px;font-size:10px;color:#d8d8d8;font-weight:bold;font-family:Liberation Serif;letter-spacing:-0.6px;">IT</div>
<svg style="left:184.5px;top:556.5px;" width="9" height="9" viewBox="0 0 9 9"><path d="M4.5 0 L5.8 3.3 L9 3.5 L6.5 5.6 L7.3 9 L4.5 7.1 L1.7 9 L2.5 5.6 L0 3.5 L3.2 3.3 Z" fill="#333"/></svg>
<div class="a" style="left:206px;top:555px;width:1px;height:13px;background:#3a3a3a;"></div>
<svg style="left:218px;top:557px;" width="8" height="8" viewBox="0 0 8 8"><path d="M0.5 0 V8" stroke="#ccc"/><path d="M7.5 0.5 L2 4 L7.5 7.5 Z" fill="none" stroke="#ccc"/></svg>
<svg style="left:236px;top:556px;" width="9" height="10" viewBox="0 0 9 10"><path d="M0 0 L9 5 L0 10 Z" fill="#e6e6e6"/></svg>
<svg style="left:256px;top:557px;" width="8" height="8" viewBox="0 0 8 8"><path d="M7.5 0 V8" stroke="#ccc"/><path d="M0.5 0.5 L6 4 L0.5 7.5 Z" fill="none" stroke="#ccc"/></svg>
<svg style="left:275px;top:557px;" width="11" height="9" viewBox="0 0 11 9"><path d="M3 7.5 H0.5 V0.5 H10.5 V7.5 H5.5" fill="none" stroke="#ccc"/><path d="M7.5 5 L5 7.5 L7.5 10" fill="none" stroke="#ccc"/></svg>
<div class="a" style="left:297px;top:555px;width:1px;height:13px;background:#3a3a3a;"></div>
<svg style="left:308px;top:556px;" width="9" height="10" viewBox="0 0 9 10"><path d="M0.5 0 V9.5 H9" fill="none" stroke="#ccc"/><path d="M2 8 L8.5 1" stroke="#ccc" stroke-width="1.2"/></svg>
<svg style="left:328px;top:557px;" width="10" height="10" viewBox="0 0 10 10"><circle cx="5" cy="5" r="4.5" fill="none" stroke="#ddd"/><circle cx="5" cy="5" r="2.8" fill="#ddd"/></svg>
<div class="t" style="left:521px;top:556.5px;font-size:9.5px;color:#e8952e;letter-spacing:0;">0 : 00 : 00 . 000</div>
<svg style="left:771px;top:556px;" width="10" height="11" viewBox="0 0 10 11"><circle cx="5" cy="5" r="2.5" fill="none" stroke="#ddd"/><path d="M5 0 V1.5 M0 5 H1.5 M8.5 5 H10 M1.5 1.5 L2.5 2.5 M8.5 1.5 L7.5 2.5 M4 9 H6 M4 10.5 H6" stroke="#ddd"/></svg>
<div class="a" style="left:786px;top:552px;width:31px;height:19px;background:#2e2e2e;"></div>
<svg style="left:789px;top:556px;" width="11" height="11" viewBox="0 0 11 11"><path d="M3 2.5 H8 A3 3 0 0 1 8 8.5 H3" fill="none" stroke="#eee" stroke-width="1.3"/><path d="M3 2.5 H5 M3 8.5 H5" stroke="#e8872a" stroke-width="1.5"/><path d="M1.5 0 V11 M0 10 H6" stroke="#888"/></svg>
<svg style="left:811px;top:560px;" width="6" height="4" viewBox="0 0 6 4"><path d="M0.5 0.5 L3 3 L5.5 0.5" fill="none" stroke="#aaa"/></svg>
<svg style="left:823px;top:557px;" width="10" height="10" viewBox="0 0 10 10"><rect x="0.0" y="0.0" width="2.5" height="2.5" fill="#eee"/><rect x="3.5" y="0.0" width="2.5" height="2.5" fill="#eee"/><rect x="7.0" y="0.0" width="2.5" height="2.5" fill="#eee"/><rect x="0.0" y="3.5" width="2.5" height="2.5" fill="#eee"/><rect x="3.5" y="3.5" width="2.5" height="2.5" fill="#eee"/><rect x="7.0" y="3.5" width="2.5" height="2.5" fill="#eee"/><rect x="0.0" y="7.0" width="2.5" height="2.5" fill="#eee"/><rect x="3.5" y="7.0" width="2.5" height="2.5" fill="#eee"/><rect x="7.0" y="7.0" width="2.5" height="2.5" fill="#eee"/></svg>
<svg style="left:843px;top:560px;" width="6" height="4" viewBox="0 0 6 4"><path d="M0.5 0.5 L3 3 L5.5 0.5" fill="none" stroke="#888"/></svg>
<div class="a" style="left:857px;top:560px;width:6px;height:2px;background:#ddd;"></div>
<div class="a" style="left:872px;top:560px;width:55px;height:2px;background:#bbb;"></div>
<svg style="left:871px;top:556px;" width="10" height="10" viewBox="0 0 10 10"><circle cx="5" cy="5" r="4.2" fill="#c8c8c8"/></svg>
<svg style="left:933px;top:558px;" width="7" height="7" viewBox="0 0 7 7"><path d="M3.5 0 V7 M0 3.5 H7" stroke="#ddd" stroke-width="1.3"/></svg>
<svg style="left:952px;top:557px;" width="7" height="8" viewBox="0 0 7 8"><path d="M0.5 3 V7.5 H4 M6.5 0.5 V4 M3 0.5 H6.5" fill="none" stroke="#ccc"/><rect x="2" y="2" width="3" height="3" fill="#ccc"/></svg>
<svg style="left:971px;top:557px;" width="8" height="8" viewBox="0 0 8 8"><path d="M0.5 7.5 L7 1 M2.5 0.5 H7.5 V5.5" fill="none" stroke="#ddd" stroke-width="1.1"/></svg>
<svg style="left:991px;top:557px;" width="8" height="8" viewBox="0 0 8 8"><path d="M0.5 0.5 L7.5 7.5 M7.5 0.5 L0.5 7.5" stroke="#ddd" stroke-width="1.2"/></svg>
<div class="a" style="left:0px;top:571px;width:1006px;height:139px;background:#353535;"></div>
<div class="a" style="left:3px;top:572px;width:201px;height:28px;background:#303030;"></div>
<div class="a" style="left:2px;top:571px;width:1px;height:139px;background:#252525;"></div>
<div class="a" style="left:204px;top:571px;width:1px;height:139px;background:#2a2a2a;"></div>
<div class="a" style="left:205px;top:572px;width:796px;height:16px;background:#333333;"></div>
<div class="a" style="left:205px;top:587px;width:796px;height:1px;background:#8a8a8a;"></div>
<svg style="left:0px;top:0px;" width="1010" height="600" viewBox="0 0 1010 600"><path d="M210.3 582 V587" stroke="#8a8a8a"/><path d="M213.7 585.5 V587" stroke="#777"/><path d="M217.0 585.5 V587" stroke="#777"/><path d="M220.4 585.5 V587" stroke="#777"/><path d="M223.7 585.5 V587" stroke="#777"/><path d="M227.1 584 V587" stroke="#8a8a8a"/><path d="M230.4 585.5 V587" stroke="#777"/><path d="M233.8 585.5 V587" stroke="#777"/><path d="M237.1 585.5 V587" stroke="#777"/><path d="M240.5 585.5 V587" stroke="#777"/><path d="M243.8 582 V587" stroke="#8a8a8a"/><path d="M247.2 585.5 V587" stroke="#777"/><path d="M250.5 585.5 V587" stroke="#777"/><path d="M253.9 585.5 V587" stroke="#777"/><path d="M257.2 585.5 V587" stroke="#777"/><path d="M260.6 584 V587" stroke="#8a8a8a"/><path d="M263.9 585.5 V587" stroke="#777"/><path d="M267.2 585.5 V587" stroke="#777"/><path d="M270.6 585.5 V587" stroke="#777"/><path d="M273.9 585.5 V587" stroke="#777"/><path d="M277.3 582 V587" stroke="#8a8a8a"/><path d="M280.7 585.5 V587" stroke="#777"/><path d="M284.0 585.5 V587" stroke="#777"/><path d="M287.4 585.5 V587" stroke="#777"/><path d="M290.7 585.5 V587" stroke="#777"/><path d="M294.1 584 V587" stroke="#8a8a8a"/><path d="M297.4 585.5 V587" stroke="#777"/><path d="M300.8 585.5 V587" stroke="#777"/><path d="M304.1 585.5 V587" stroke="#777"/><path d="M307.4 585.5 V587" stroke="#777"/><path d="M310.8 582 V587" stroke="#8a8a8a"/><path d="M314.2 585.5 V587" stroke="#777"/><path d="M317.5 585.5 V587" stroke="#777"/><path d="M320.9 585.5 V587" stroke="#777"/><path d="M324.2 585.5 V587" stroke="#777"/><path d="M327.6 584 V587" stroke="#8a8a8a"/><path d="M330.9 585.5 V587" stroke="#777"/><path d="M334.2 585.5 V587" stroke="#777"/><path d="M337.6 585.5 V587" stroke="#777"/><path d="M340.9 585.5 V587" stroke="#777"/><path d="M344.3 582 V587" stroke="#8a8a8a"/><path d="M347.7 585.5 V587" stroke="#777"/><path d="M351.0 585.5 V587" stroke="#777"/><path d="M354.4 585.5 V587" stroke="#777"/><path d="M357.7 585.5 V587" stroke="#777"/><path d="M361.1 584 V587" stroke="#8a8a8a"/><path d="M364.4 585.5 V587" stroke="#777"/><path d="M367.8 585.5 V587" stroke="#777"/><path d="M371.1 585.5 V587" stroke="#777"/><path d="M374.4 585.5 V587" stroke="#777"/><path d="M377.8 582 V587" stroke="#8a8a8a"/><path d="M381.2 585.5 V587" stroke="#777"/><path d="M384.5 585.5 V587" stroke="#777"/><path d="M387.9 585.5 V587" stroke="#777"/><path d="M391.2 585.5 V587" stroke="#777"/><path d="M394.6 584 V587" stroke="#8a8a8a"/><path d="M397.9 585.5 V587" stroke="#777"/><path d="M401.2 585.5 V587" stroke="#777"/><path d="M404.6 585.5 V587" stroke="#777"/><path d="M407.9 585.5 V587" stroke="#777"/><path d="M411.3 582 V587" stroke="#8a8a8a"/><path d="M414.7 585.5 V587" stroke="#777"/><path d="M418.0 585.5 V587" stroke="#777"/><path d="M421.4 585.5 V587" stroke="#777"/><path d="M424.7 585.5 V587" stroke="#777"/><path d="M428.1 584 V587" stroke="#8a8a8a"/><path d="M431.4 585.5 V587" stroke="#777"/><path d="M434.8 585.5 V587" stroke="#777"/><path d="M438.1 585.5 V587" stroke="#777"/><path d="M441.4 585.5 V587" stroke="#777"/><path d="M444.8 582 V587" stroke="#8a8a8a"/><path d="M448.2 585.5 V587" stroke="#777"/><path d="M451.5 585.5 V587" stroke="#777"/><path d="M454.9 585.5 V587" stroke="#777"/><path d="M458.2 585.5 V587" stroke="#777"/><path d="M461.6 584 V587" stroke="#8a8a8a"/><path d="M464.9 585.5 V587" stroke="#777"/><path d="M468.2 585.5 V587" stroke="#777"/><path d="M471.6 585.5 V587" stroke="#777"/><path d="M474.9 585.5 V587" stroke="#777"/><path d="M478.3 582 V587" stroke="#8a8a8a"/><path d="M481.7 585.5 V587" stroke="#777"/><path d="M485.0 585.5 V587" stroke="#777"/><path d="M488.4 585.5 V587" stroke="#777"/><path d="M491.7 585.5 V587" stroke="#777"/><path d="M495.1 584 V587" stroke="#8a8a8a"/><path d="M498.4 585.5 V587" stroke="#777"/><path d="M501.8 585.5 V587" stroke="#777"/><path d="M505.1 585.5 V587" stroke="#777"/><path d="M508.4 585.5 V587" stroke="#777"/><path d="M511.8 582 V587" stroke="#8a8a8a"/><path d="M515.1 585.5 V587" stroke="#777"/><path d="M518.5 585.5 V587" stroke="#777"/><path d="M521.9 585.5 V587" stroke="#777"/><path d="M525.2 585.5 V587" stroke="#777"/><path d="M528.5 584 V587" stroke="#8a8a8a"/><path d="M531.9 585.5 V587" stroke="#777"/><path d="M535.2 585.5 V587" stroke="#777"/><path d="M538.6 585.5 V587" stroke="#777"/><path d="M542.0 585.5 V587" stroke="#777"/><path d="M545.3 582 V587" stroke="#8a8a8a"/><path d="M548.6 585.5 V587" stroke="#777"/><path d="M552.0 585.5 V587" stroke="#777"/><path d="M555.3 585.5 V587" stroke="#777"/><path d="M558.7 585.5 V587" stroke="#777"/><path d="M562.0 584 V587" stroke="#8a8a8a"/><path d="M565.4 585.5 V587" stroke="#777"/><path d="M568.8 585.5 V587" stroke="#777"/><path d="M572.1 585.5 V587" stroke="#777"/><path d="M575.4 585.5 V587" stroke="#777"/><path d="M578.8 582 V587" stroke="#8a8a8a"/><path d="M582.1 585.5 V587" stroke="#777"/><path d="M585.5 585.5 V587" stroke="#777"/><path d="M588.8 585.5 V587" stroke="#777"/><path d="M592.2 585.5 V587" stroke="#777"/><path d="M595.5 584 V587" stroke="#8a8a8a"/><path d="M598.9 585.5 V587" stroke="#777"/><path d="M602.2 585.5 V587" stroke="#777"/><path d="M605.6 585.5 V587" stroke="#777"/><path d="M608.9 585.5 V587" stroke="#777"/><path d="M612.3 582 V587" stroke="#8a8a8a"/><path d="M615.6 585.5 V587" stroke="#777"/><path d="M619.0 585.5 V587" stroke="#777"/><path d="M622.3 585.5 V587" stroke="#777"/><path d="M625.7 585.5 V587" stroke="#777"/><path d="M629.0 584 V587" stroke="#8a8a8a"/><path d="M632.4 585.5 V587" stroke="#777"/><path d="M635.8 585.5 V587" stroke="#777"/><path d="M639.1 585.5 V587" stroke="#777"/><path d="M642.4 585.5 V587" stroke="#777"/><path d="M645.8 582 V587" stroke="#8a8a8a"/><path d="M649.1 585.5 V587" stroke="#777"/><path d="M652.5 585.5 V587" stroke="#777"/><path d="M655.8 585.5 V587" stroke="#777"/><path d="M659.2 585.5 V587" stroke="#777"/><path d="M662.5 584 V587" stroke="#8a8a8a"/><path d="M665.9 585.5 V587" stroke="#777"/><path d="M669.2 585.5 V587" stroke="#777"/><path d="M672.6 585.5 V587" stroke="#777"/><path d="M675.9 585.5 V587" stroke="#777"/><path d="M679.3 582 V587" stroke="#8a8a8a"/><path d="M682.6 585.5 V587" stroke="#777"/><path d="M686.0 585.5 V587" stroke="#777"/><path d="M689.3 585.5 V587" stroke="#777"/><path d="M692.7 585.5 V587" stroke="#777"/><path d="M696.0 584 V587" stroke="#8a8a8a"/><path d="M699.4 585.5 V587" stroke="#777"/><path d="M702.8 585.5 V587" stroke="#777"/><path d="M706.1 585.5 V587" stroke="#777"/><path d="M709.4 585.5 V587" stroke="#777"/><path d="M712.8 582 V587" stroke="#8a8a8a"/><path d="M716.1 585.5 V587" stroke="#777"/><path d="M719.5 585.5 V587" stroke="#777"/><path d="M722.8 585.5 V587" stroke="#777"/><path d="M726.2 585.5 V587" stroke="#777"/><path d="M729.5 584 V587" stroke="#8a8a8a"/><path d="M732.9 585.5 V587" stroke="#777"/><path d="M736.2 585.5 V587" stroke="#777"/><path d="M739.6 585.5 V587" stroke="#777"/><path d="M742.9 585.5 V587" stroke="#777"/><path d="M746.3 582 V587" stroke="#8a8a8a"/><path d="M749.6 585.5 V587" stroke="#777"/><path d="M753.0 585.5 V587" stroke="#777"/><path d="M756.3 585.5 V587" stroke="#777"/><path d="M759.7 585.5 V587" stroke="#777"/><path d="M763.0 584 V587" stroke="#8a8a8a"/><path d="M766.4 585.5 V587" stroke="#777"/><path d="M769.8 585.5 V587" stroke="#777"/><path d="M773.1 585.5 V587" stroke="#777"/><path d="M776.4 585.5 V587" stroke="#777"/><path d="M779.8 582 V587" stroke="#8a8a8a"/><path d="M783.1 585.5 V587" stroke="#777"/><path d="M786.5 585.5 V587" stroke="#777"/><path d="M789.8 585.5 V587" stroke="#777"/><path d="M793.2 585.5 V587" stroke="#777"/><path d="M796.5 584 V587" stroke="#8a8a8a"/><path d="M799.9 585.5 V587" stroke="#777"/><path d="M803.2 585.5 V587" stroke="#777"/><path d="M806.6 585.5 V587" stroke="#777"/><path d="M809.9 585.5 V587" stroke="#777"/><path d="M813.3 582 V587" stroke="#8a8a8a"/><path d="M816.6 585.5 V587" stroke="#777"/><path d="M820.0 585.5 V587" stroke="#777"/><path d="M823.3 585.5 V587" stroke="#777"/><path d="M826.7 585.5 V587" stroke="#777"/><path d="M830.0 584 V587" stroke="#8a8a8a"/><path d="M833.4 585.5 V587" stroke="#777"/><path d="M836.8 585.5 V587" stroke="#777"/><path d="M840.1 585.5 V587" stroke="#777"/><path d="M843.4 585.5 V587" stroke="#777"/><path d="M846.8 582 V587" stroke="#8a8a8a"/><path d="M850.1 585.5 V587" stroke="#777"/><path d="M853.5 585.5 V587" stroke="#777"/><path d="M856.8 585.5 V587" stroke="#777"/><path d="M860.2 585.5 V587" stroke="#777"/><path d="M863.5 584 V587" stroke="#8a8a8a"/><path d="M866.9 585.5 V587" stroke="#777"/><path d="M870.2 585.5 V587" stroke="#777"/><path d="M873.6 585.5 V587" stroke="#777"/><path d="M876.9 585.5 V587" stroke="#777"/><path d="M880.3 582 V587" stroke="#8a8a8a"/><path d="M883.6 585.5 V587" stroke="#777"/><path d="M887.0 585.5 V587" stroke="#777"/><path d="M890.3 585.5 V587" stroke="#777"/><path d="M893.7 585.5 V587" stroke="#777"/><path d="M897.0 584 V587" stroke="#8a8a8a"/><path d="M900.4 585.5 V587" stroke="#777"/><path d="M903.8 585.5 V587" stroke="#777"/><path d="M907.1 585.5 V587" stroke="#777"/><path d="M910.4 585.5 V587" stroke="#777"/><path d="M913.8 582 V587" stroke="#8a8a8a"/><path d="M917.1 585.5 V587" stroke="#777"/><path d="M920.5 585.5 V587" stroke="#777"/><path d="M923.8 585.5 V587" stroke="#777"/><path d="M927.2 585.5 V587" stroke="#777"/><path d="M930.5 584 V587" stroke="#8a8a8a"/><path d="M933.9 585.5 V587" stroke="#777"/><path d="M937.2 585.5 V587" stroke="#777"/><path d="M940.6 585.5 V587" stroke="#777"/><path d="M943.9 585.5 V587" stroke="#777"/><path d="M947.3 582 V587" stroke="#8a8a8a"/><path d="M950.6 585.5 V587" stroke="#777"/><path d="M954.0 585.5 V587" stroke="#777"/><path d="M957.3 585.5 V587" stroke="#777"/><path d="M960.7 585.5 V587" stroke="#777"/><path d="M964.0 584 V587" stroke="#8a8a8a"/><path d="M967.4 585.5 V587" stroke="#777"/><path d="M970.8 585.5 V587" stroke="#777"/><path d="M974.1 585.5 V587" stroke="#777"/><path d="M977.4 585.5 V587" stroke="#777"/><path d="M980.8 582 V587" stroke="#8a8a8a"/><path d="M984.1 585.5 V587" stroke="#777"/><path d="M987.5 585.5 V587" stroke="#777"/><path d="M990.8 585.5 V587" stroke="#777"/><path d="M994.2 585.5 V587" stroke="#777"/><path d="M997.5 584 V587" stroke="#8a8a8a"/></svg>
<div class="t" style="left:195.3px;top:571.5px;width:30px;text-align:center;font-size:7.5px;color:#bdbdbd;letter-spacing:-0.1px;">00:00</div>
<div class="t" style="left:228.8px;top:571.5px;width:30px;text-align:center;font-size:7.5px;color:#bdbdbd;letter-spacing:-0.1px;">00:01</div>
<div class="t" style="left:262.3px;top:571.5px;width:30px;text-align:center;font-size:7.5px;color:#bdbdbd;letter-spacing:-0.1px;">00:02</div>
<div class="t" style="left:295.8px;top:571.5px;width:30px;text-align:center;font-size:7.5px;color:#bdbdbd;letter-spacing:-0.1px;">00:03</div>
<div class="t" style="left:329.3px;top:571.5px;width:30px;text-align:center;font-size:7.5px;color:#bdbdbd;letter-spacing:-0.1px;">00:04</div>
<div class="t" style="left:362.8px;top:571.5px;width:30px;text-align:center;font-size:7.5px;color:#bdbdbd;letter-spacing:-0.1px;">00:05</div>
<div class="t" style="left:396.3px;top:571.5px;width:30px;text-align:center;font-size:7.5px;color:#bdbdbd;letter-spacing:-0.1px;">00:06</div>
<div class="t" style="left:429.8px;top:571.5px;width:30px;text-align:center;font-size:7.5px;color:#bdbdbd;letter-spacing:-0.1px;">00:07</div>
<div class="t" style="left:463.3px;top:571.5px;width:30px;text-align:center;font-size:7.5px;color:#bdbdbd;letter-spacing:-0.1px;">00:08</div>
<div class="t" style="left:496.8px;top:571.5px;width:30px;text-align:center;font-size:7.5px;color:#bdbdbd;letter-spacing:-0.1px;">00:09</div>
<div class="t" style="left:530.3px;top:571.5px;width:30px;text-align:center;font-size:7.5px;color:#bdbdbd;letter-spacing:-0.1px;">00:10</div>
<div class="t" style="left:563.8px;top:571.5px;width:30px;text-align:center;font-size:7.5px;color:#bdbdbd;letter-spacing:-0.1px;">00:11</div>
<div class="t" style="left:597.3px;top:571.5px;width:30px;text-align:center;font-size:7.5px;color:#bdbdbd;letter-spacing:-0.1px;">00:12</div>
<div class="t" style="left:630.8px;top:571.5px;width:30px;text-align:center;font-size:7.5px;color:#bdbdbd;letter-spacing:-0.1px;">00:13</div>
<div class="t" style="left:664.3px;top:571.5px;width:30px;text-align:center;font-size:7.5px;color:#bdbdbd;letter-spacing:-0.1px;">00:14</div>
<div class="t" style="left:697.8px;top:571.5px;width:30px;text-align:center;font-size:7.5px;color:#bdbdbd;letter-spacing:-0.1px;">00:15</div>
<div class="t" style="left:731.3px;top:571.5px;width:30px;text-align:center;font-size:7.5px;color:#bdbdbd;letter-spacing:-0.1px;">00:16</div>
<div class="t" style="left:764.8px;top:571.5px;width:30px;text-align:center;font-size:7.5px;color:#bdbdbd;letter-spacing:-0.1px;">00:17</div>
<div class="t" style="left:798.3px;top:571.5px;width:30px;text-align:center;font-size:7.5px;color:#bdbdbd;letter-spacing:-0.1px;">00:18</div>
<div class="t" style="left:831.8px;top:571.5px;width:30px;text-align:center;font-size:7.5px;color:#bdbdbd;letter-spacing:-0.1px;">00:19</div>
<div class="t" style="left:865.3px;top:571.5px;width:30px;text-align:center;font-size:7.5px;color:#bdbdbd;letter-spacing:-0.1px;">00:20</div>
<div class="t" style="left:898.8px;top:571.5px;width:30px;text-align:center;font-size:7.5px;color:#bdbdbd;letter-spacing:-0.1px;">00:21</div>
<div class="t" style="left:932.3px;top:571.5px;width:30px;text-align:center;font-size:7.5px;color:#bdbdbd;letter-spacing:-0.1px;">00:22</div>
<div class="t" style="left:965.8px;top:571.5px;width:30px;text-align:center;font-size:7.5px;color:#bdbdbd;letter-spacing:-0.1px;">00:23</div>
<svg style="left:195.5px;top:590px;" width="6" height="7.5" viewBox="0 0 6 7.5"><path d="M0 2.5 L6 0 V7.5 L4 4.5 Z" fill="#e6e6e6"/></svg>
<div class="a" style="left:3px;top:600px;width:201px;height:12px;background:#262626;"></div>
<div class="a" style="left:3px;top:612px;width:201px;height:13px;background:#6b6b6b;"></div>
<div class="a" style="left:4px;top:612px;width:4px;height:13px;background:#f0d020;"></div>
<svg style="left:13px;top:602px;" width="6" height="8" viewBox="0 0 6 8"><path d="M0 0.5 H6 M0 7.5 H6 M1 1 L3 4 L5 1 M1 7 L3 4 L5 7" stroke="#ddd" fill="none"/></svg>
<div class="t" style="left:92px;top:601px;font-size:8.5px;color:#e8e8e8;letter-spacing:-0.5px;">Actions</div>
<svg style="left:154px;top:601px;" width="11" height="10" viewBox="0 0 11 10"><path d="M2 3 Q5.5 0 9.5 3" fill="none" stroke="#666"/><path d="M0.3 6 Q5.2 0.5 10.3 6 Q5.2 11 0.3 6 Z" fill="#e8e8e8"/><ellipse cx="5.3" cy="6" rx="2" ry="1.3" fill="#333"/></svg>
<svg style="left:168px;top:601px;" width="9" height="10" viewBox="0 0 9 10"><path d="M2 5 V2.5 A1.8 1.8 0 0 1 5.5 2.5 V5" fill="none" stroke="#e0e0e0" stroke-width="1.2"/><rect x="0.5" y="5" width="6" height="4.5" fill="#e0e0e0"/><path d="M6.5 1 Q8.5 1 8.5 3 V7" fill="none" stroke="#777"/><rect x="3" y="6.3" width="1.2" height="1.5" fill="#333"/></svg>
<svg style="left:183px;top:601px;" width="5" height="10" viewBox="0 0 5 10"><path d="M4.8 0 L1 5.3 H3 L0.8 10 L4.8 4.3 H2.8 Z" fill="#e6e6e6"/></svg>
<svg style="left:194.5px;top:602px;" width="7" height="7" viewBox="0 0 7 7"><path d="M2 0.5 H5 L6.5 2 V5 L5 6.5 H2 L0.5 5 V2 Z" fill="none" stroke="#ddd"/><circle cx="3.5" cy="3.5" r="1.5" fill="none" stroke="#ddd" stroke-width="0.8"/></svg>
<svg style="left:13px;top:616px;" width="6" height="4" viewBox="0 0 6 4"><path d="M0 0 H6 L3 4 Z" fill="#e6e6e6"/></svg>
<div class="t" style="left:23px;top:614px;font-size:8.5px;color:#e8e8e8;letter-spacing:-0.5px;">Scene_1</div>
<svg style="left:183px;top:614px;" width="5" height="10" viewBox="0 0 5 10"><path d="M4.8 0 L1 5.3 H3 L0.8 10 L4.8 4.3 H2.8 Z" fill="#dcdcdc"/></svg>
<div class="a" style="left:205px;top:600px;width:801px;height:12px;background:#262626;"></div>
<div class="a" style="left:205px;top:612px;width:801px;height:13px;background:#6b6b6b;"></div>
<div class="a" style="left:205px;top:625px;width:801px;height:75px;background:#353535;"></div>
<div class="a" style="left:205px;top:588px;width:5px;height:112px;background:#2f2f2f;"></div>
<div class="a" style="left:205px;top:700px;width:801px;height:10px;background:#2a2a2a;"></div>
<svg style="left:207px;top:702px;" width="4" height="6" viewBox="0 0 4 6"><path d="M3.5 0.5 L0.5 3 L3.5 5.5" fill="none" stroke="#bbb"/></svg>
<div class="a" style="left:215px;top:702px;width:748px;height:6px;background:#555555;"></div>
<svg style="left:999px;top:702px;" width="4" height="6" viewBox="0 0 4 6"><path d="M0.5 0.5 L3.5 3 L0.5 5.5" fill="none" stroke="#bbb"/></svg>
<div class="a" style="left:209px;top:587px;width:1px;height:115px;background:#cc2020;"></div>
<svg style="left:206px;top:577px;" width="7" height="11" viewBox="0 0 7 11"><path d="M0 0 H7 V8 L3.5 11 L0 8 Z" fill="#f0961e"/></svg>
<div class="a" style="left:0px;top:710px;width:1287px;height:1px;background:#262626;"></div>
<div class="a" style="left:0px;top:711px;width:1287px;height:13px;background:#424242;"></div>
<div class="a" style="left:0px;top:724px;width:1287px;height:1px;background:#151515;"></div>
<div class="a" style="left:329px;top:724px;width:32px;height:1px;background:#4a4a4a;"></div>
<div class="t" style="left:1081px;top:713px;font-size:8.5px;color:#e8e8e8;letter-spacing:-0.5px;">Canvas Zoom</div>
<div class="a" style="left:1133px;top:716.5px;width:5px;height:1.5px;background:#ddd;"></div>
<div class="a" style="left:1146px;top:716px;width:67px;height:3px;background:#1e1e1e;"></div>
<svg style="left:1175px;top:713px;" width="9" height="9" viewBox="0 0 9 9"><circle cx="4.5" cy="4.5" r="4" fill="#8a8a8a"/></svg>
<svg style="left:1220px;top:714px;" width="6" height="6" viewBox="0 0 6 6"><path d="M3 0 V6 M0 3 H6" stroke="#ddd" stroke-width="1.3"/></svg>
<div class="t" style="left:1241px;top:713px;font-size:8.5px;color:#e8e8e8;letter-spacing:-0.5px;">100%</div>
<svg style="left:1272px;top:713px;" width="10" height="9" viewBox="0 0 10 9"><path d="M0.5 3 V0.5 H3 M7 0.5 H9.5 V3 M9.5 6 V8.5 H7 M3 8.5 H0.5 V6" fill="none" stroke="#ccc"/><rect x="3" y="2.5" width="4" height="4" fill="none" stroke="#ccc"/></svg>
<svg style="left:0px;top:0px;" width="1290" height="200" viewBox="0 0 1290 200"><rect x="175.55" y="69.05" width="829.3" height="31.2" rx="0.3" fill="none" stroke="#00aeef" stroke-width="3.5"/></svg>
<div class="a" style="left:1003px;top:521px;width:286px;height:190px;background:transparent;border:3px solid #00aeef;"></div>
<div class="a" style="left:1287px;top:0px;width:1px;height:725px;background:#7a7a7a;"></div>
<div class="a" style="left:1288px;top:0px;width:2px;height:725px;background:#cfcfcf;"></div>
<svg style="left:0;top:0" width="1290" height="725" viewBox="0 0 1290 725"><path d="M483.7 119.8 H510.5 L544.5 92.5 L547.8 119.8 H652.8 Q665.3 119.8 665.3 132.3 V161.1 Q665.3 173.6 652.8 173.6 H483.7 Q471.2 173.6 471.2 161.1 V132.3 Q471.2 119.8 483.7 119.8 Z" fill="#fff" stroke="#08aaeb" stroke-width="2.4" stroke-linejoin="miter"/></svg>
<div class="t" style="left:493px;top:137px;font-size:16.8px;color:#111;letter-spacing:0.28px;line-height:20px;-webkit-text-stroke:0;">Responsive layouts</div>
<svg style="left:0;top:0" width="1290" height="725" viewBox="0 0 1290 725"><path d="M1039.3 443.4 H1209.3 Q1221.8 443.4 1221.8 455.9 V486.9 Q1221.8 499.4 1209.3 499.4 H1104.5 L1081.4 528 L1066 499.4 H1039.3 Q1026.8 499.4 1026.8 486.9 V455.9 Q1026.8 443.4 1039.3 443.4 Z" fill="#fff" stroke="#08aaeb" stroke-width="2.4" stroke-linejoin="miter"/></svg>
<div class="t" style="left:1057px;top:462px;font-size:16.8px;color:#111;letter-spacing:0.27px;line-height:20px;-webkit-text-stroke:0;">Breakpoints pane</div>
</body></html>
